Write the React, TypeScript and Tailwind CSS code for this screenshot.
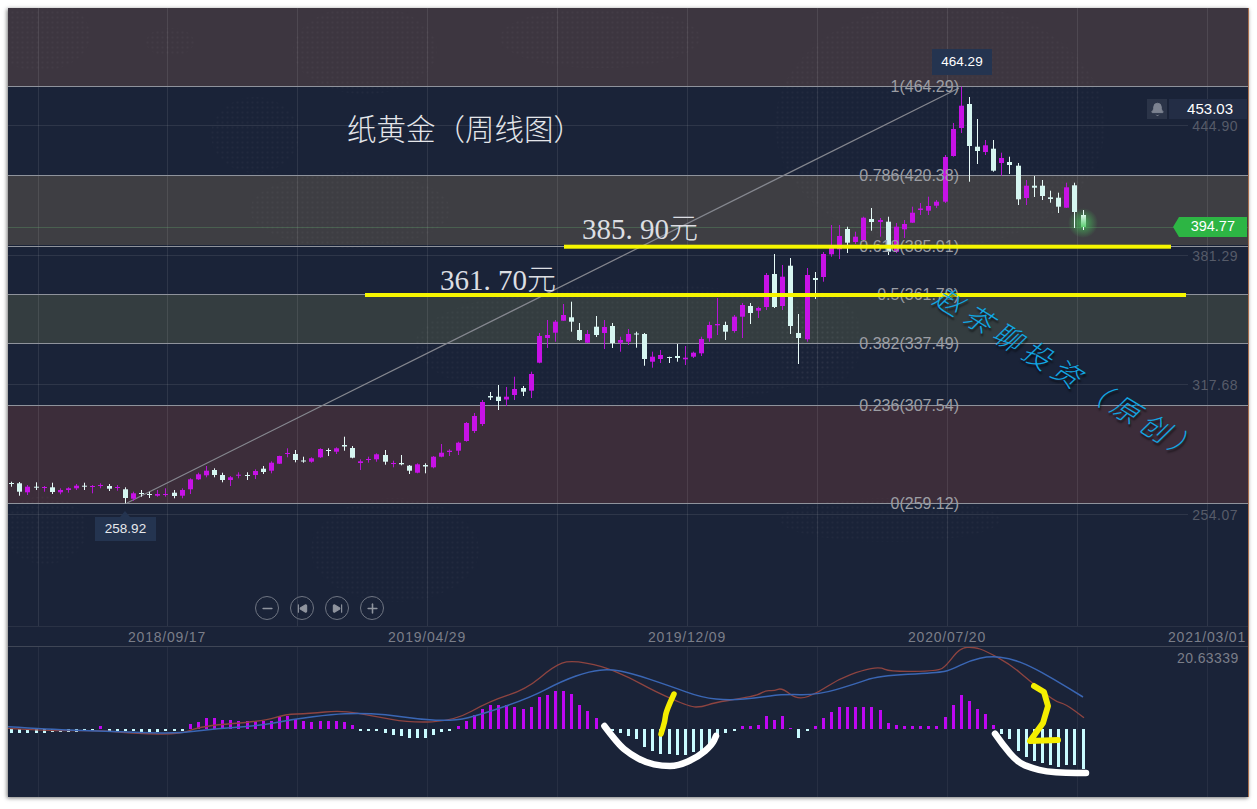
import { Bell, Minus, Plus, SkipBack, SkipForward } from "lucide-react"

type Candle = [number, number, number, number, "w" | "p"]

// wick top, wick bottom, body top, body bottom, colour (weekly, left to right)
const candles: Candle[] = [
  [481.7, 486.7, 483, 484, "w"], [482, 495.7, 483.3, 491.7, "w"], [485, 495, 486.7, 492.3, "p"], [482.3, 490, 486.7, 487.7, "w"],
  [486, 491.7, 487, 488, "p"], [482.7, 494, 487.3, 492, "w"], [488.3, 494.3, 490, 492.3, "p"], [487.3, 492.7, 488.3, 490, "p"],
  [484, 490, 485.7, 488.3, "p"], [482.7, 490, 485.7, 486.7, "w"], [485, 493.3, 486, 487, "p"], [483.3, 488.3, 485, 486, "p"],
  [484, 491, 486, 488.7, "w"], [485, 490.7, 487, 488, "p"], [487.3, 503.3, 489.3, 498, "w"], [491.7, 500.7, 493.3, 498.7, "p"],
  [490, 496.7, 493, 494, "w"], [491.7, 498, 494, 495, "w"], [490, 496.7, 494, 495.7, "p"], [488.3, 496.7, 494, 495, "p"],
  [490, 498.3, 492.7, 496, "w"], [488.3, 498.3, 490, 495.7, "p"], [478.3, 494, 479.3, 489.3, "p"], [472.7, 480, 474.3, 479.3, "p"],
  [466, 477.3, 470.7, 475.3, "p"], [468.3, 477.3, 470, 475, "w"], [472.7, 482.3, 475, 480, "w"], [476, 486, 477.3, 480, "p"],
  [472.3, 478.3, 474.7, 475.7, "p"], [472.3, 480, 475, 476, "w"], [469.3, 479, 471, 475, "p"], [466, 474, 468.7, 472, "w"],
  [461.3, 473.3, 462.7, 470.7, "p"], [455.7, 464, 456, 463.7, "p"], [448.3, 457.3, 453, 454, "p"], [450, 462.3, 454, 460, "w"],
  [456.7, 462.7, 460.5, 461.5, "w"], [457.3, 462.7, 458.3, 461.7, "p"], [448.3, 458, 449, 457.3, "p"], [448.3, 456, 450, 451, "w"],
  [447.3, 454, 448.3, 451.7, "p"], [436.7, 450.7, 445, 446.5, "w"], [446, 458.3, 448, 457.7, "w"], [459.3, 470, 461.3, 463, "p"],
  [456.7, 462.7, 459, 460, "p"], [453.3, 461.7, 454.3, 459.3, "p"], [450, 464.7, 455, 461.7, "w"], [460.7, 467.3, 463, 464, "p"],
  [455, 465.3, 463, 464.3, "w"], [465, 474, 465.7, 470.7, "w"], [463.3, 473.3, 464.3, 472.7, "p"], [463.3, 473.3, 465, 466.5, "w"],
  [456, 468.3, 456.7, 467.3, "p"], [444, 457.3, 452.7, 456.7, "p"], [449.3, 456, 450.7, 452, "p"], [441.7, 455, 442.7, 450.7, "p"],
  [422, 441.7, 423, 441, "p"], [413, 433, 416, 431, "p"], [400, 426, 402, 424, "p"], [392, 400, 396, 397.5, "w"],
  [385, 410, 396.7, 401, "w"], [387, 406, 396.7, 399.5, "p"], [376.7, 400, 389, 395, "p"], [386, 396, 388, 391.7, "w"],
  [371.7, 398, 374, 390.7, "p"], [333, 363.3, 336, 362.7, "p"], [320, 348, 335, 338, "p"], [320, 341.7, 321.7, 332.7, "p"],
  [304, 320.7, 315, 320.7, "p"], [301.7, 331.7, 317.3, 321.7, "w"], [323, 340.7, 330, 340, "w"], [330, 343, 334, 342.7, "p"],
  [316, 337, 326.7, 335, "w"], [320, 349, 327, 333, "p"], [323, 348, 326, 343, "w"], [336.7, 351.7, 340, 342.7, "p"],
  [329, 345, 334, 341.7, "p"], [331.7, 347.7, 333.5, 334.5, "w"], [333, 365.7, 334, 359, "w"], [351.7, 367.7, 356.7, 361.7, "p"],
  [350, 363, 355, 359, "p"], [356.7, 363, 357, 358, "w"], [344, 361.7, 356, 358, "w"], [346, 365, 357.7, 359.3, "p"],
  [351.7, 358, 352.7, 356.7, "p"], [336.7, 356, 339, 353.3, "p"], [321.7, 341.7, 325, 338.3, "p"], [298, 335, 324, 325.3, "p"],
  [321.7, 340, 325, 331.7, "w"], [315, 332.7, 316.7, 331, "p"], [303, 338, 305, 316.7, "p"], [303, 324, 306, 313, "w"],
  [306.7, 318, 308, 310.7, "p"], [273, 310, 275, 307, "p"], [254, 308, 274, 307, "w"], [265, 310, 276.7, 306, "p"],
  [258, 334, 265.7, 326, "w"], [314, 364, 333, 338, "w"], [268, 341.7, 275, 339.3, "p"], [272, 299, 278, 280, "w"],
  [252, 281.7, 254, 277, "p"], [225, 256.7, 247, 254.3, "p"], [225, 259, 236, 249.3, "p"], [226.7, 253, 229, 242.7, "w"],
  [231.7, 244, 236.7, 242, "p"], [216.7, 241.7, 217.7, 240, "p"], [208, 230.7, 219, 222, "w"], [218, 236.7, 220, 222, "p"],
  [216.7, 255, 221.7, 251.7, "w"], [223, 253, 226.7, 251.7, "p"], [220, 238, 224, 229.3, "p"], [206.7, 223, 212.7, 222.7, "p"],
  [203, 215, 208.5, 210, "p"], [196.7, 215, 206, 210.7, "p"], [200, 208, 201.7, 205.7, "p"], [155, 203, 157, 201.7, "p"],
  [123, 156.7, 129, 156, "p"], [86.7, 133, 105.7, 128, "p"], [97, 181.7, 104, 146, "w"], [119, 164, 146.7, 151, "w"],
  [140, 155, 145.3, 152, "p"], [140, 171.7, 148.7, 170.7, "w"], [152.7, 175.7, 158, 163, "p"], [156.7, 174, 162, 165, "w"],
  [163, 205, 165.7, 199.3, "w"], [180, 205, 185.7, 198, "p"], [176, 197, 185.7, 187.7, "w"], [180, 200, 185.7, 196, "w"],
  [190.7, 202.7, 197.3, 199, "w"], [192.7, 213, 197.7, 206.7, "w"], [182.7, 208, 187.3, 207.7, "p"], [182.7, 228, 185.3, 212, "w"],
]

// MACD histogram, positive goes up in purple, negative goes down in cyan
const macd = [
  -4, -4, -4, -4, -4, -3, -3, -3, -3, -2, -2, 3, -2, -2, -2, -2, -3, -3, -3, -2, -2, -2,
  5, 7, 11, 11, 9, 9, 8, 8, 8, 8, 8, 12, 13, 10, 8, 7, 8, 8, 8, 7, 4,
  -2, -2, -2, -4, -6, -7, -9, -9, -9, -6, -3, -2,
  3, 8, 14, 20, 24, 24, 24, 22, 20, 22, 32, 34, 38, 38, 35, 24, 18, 11, 5,
  -2, -4, -7, -10, -18, -22, -25, -25, -26, -26, -23, -22, -15, -8, -4, -2,
  3, 3, 4, 13, 9, 13, 1, -9, -2,
  3, 11, 17, 22, 22, 22, 22, 22, 19, 6, 4, 3, 3, 3, 3, 3, 12, 24, 34, 28, 20, 15, 4,
  -5, -10, -22, -28, -32, -34, -36, -38, -36, -36, -40,
]

const blueLine: number[][] = [[8,725.7],[50,728.3],[100,730],[140,731.7],[181,732.3],[217,727.3],[257,725],[293,718.3],[333,713.3],[357,712.3],[385,713.3],[418,718.3],[454,720],[482,713.3],[530,696.7],[562,680],[590,670],[610,668.3],[630,671.7],[670,685],[702,696.7],[730,699.3],[758,696.7],[782,693.3],[818,694],[854,683.3],[878,675],[938,671.7],[950,669.3],[970,659.3],[990,655],[1010,657.3],[1030,665],[1054,678.3],[1083,696]]
const redLine: number[][] = [[8,727.3],[50,730],[100,729.3],[137,732.7],[181,733.3],[201,725],[265,720],[285,713.3],[309,712.7],[341,709.3],[373,715],[410,721.7],[454,720],[490,700],[526,688.3],[554,665],[570,659.3],[602,665],[630,676.7],[654,690],[690,706],[702,706],[714,701.7],[742,697.3],[758,694],[766,689.3],[774,690],[782,686.7],[798,699.3],[818,691.7],[838,678.3],[862,669.3],[880,666],[890,670.7],[938,670],[946,665],[960,646.7],[974,646],[986,650],[1010,663.3],[1030,680],[1054,700],[1066,703.3],[1084,716.7]]

const fibLevels = [
  { y: 86, label: "1(464.29)" },
  { y: 175, label: "0.786(420.38)" },
  { y: 246, label: "0.618(385.01)" },
  { y: 294, label: "0.5(361.70)" },
  { y: 343, label: "0.382(337.49)" },
  { y: 405, label: "0.236(307.54)" },
  { y: 503, label: "0(259.12)" },
]

const axisPrices = [
  { y: 125, label: "444.90" },
  { y: 255, label: "381.29" },
  { y: 384, label: "317.68" },
  { y: 514, label: "254.07" },
]

const gridX = [38, 167, 297, 427, 557, 687, 817, 947, 1077, 1207]

const candleX = (i: number) => Math.round(11.2 + 8.116 * i)

// rounds the corners of a point list by running through segment midpoints
function smooth(points: number[][]) {
  let d = `M${points[0][0]},${points[0][1]}`
  for (let i = 1; i < points.length - 1; i++) {
    const mx = (points[i][0] + points[i + 1][0]) / 2
    const my = (points[i][1] + points[i + 1][1]) / 2
    d += ` Q${points[i][0]},${points[i][1]} ${mx},${my}`
  }
  const last = points[points.length - 1]
  return `${d} L${last[0]},${last[1]}`
}

function CandleMark({ c, x }: { c: Candle; x: number }) {
  const fill = c[4] === "p" ? "#c712e6" : "#d6f6f1"
  const wick = c[4] === "p" ? "#b514d4" : "#e8fbf8"
  return (
    <g>
      <rect x={x} y={c[0]} width={1} height={c[1] - c[0]} fill={wick} />
      <rect x={x - 2} y={c[2]} width={5} height={c[3] - c[2]} fill={fill} />
    </g>
  )
}

function MainChart() {
  return (
    <svg viewBox="8 8 1240 618" className="absolute inset-0 h-[618px] w-[1240px]">
      <defs>
        <pattern id="dots" width="5" height="5" patternUnits="userSpaceOnUse">
          <circle cx="2.5" cy="2.5" r="1" fill="#ffffff" fillOpacity="0.032" />
        </pattern>
        <radialGradient id="glow">
          <stop offset="0%" stopColor="#49d35f" stopOpacity="0.75" />
          <stop offset="100%" stopColor="#49d35f" stopOpacity="0" />
        </radialGradient>
        <linearGradient id="lastBody" x1="0" y1="0" x2="0" y2="1">
          <stop offset="0%" stopColor="#d6f6e6" />
          <stop offset="100%" stopColor="#5fcf73" />
        </linearGradient>
      </defs>

      {/* faint world map */}
      <g fill="url(#dots)">
        <ellipse cx="40" cy="35" rx="50" ry="36" />
        <ellipse cx="170" cy="42" rx="24" ry="14" />
        <ellipse cx="255" cy="135" rx="44" ry="38" />
        <ellipse cx="365" cy="50" rx="72" ry="44" />
        <ellipse cx="350" cy="210" rx="100" ry="38" />
        <ellipse cx="45" cy="530" rx="42" ry="34" />
        <ellipse cx="395" cy="550" rx="84" ry="52" />
        <ellipse cx="630" cy="345" rx="215" ry="62" />
        <ellipse cx="940" cy="125" rx="165" ry="122" />
        <ellipse cx="820" cy="340" rx="42" ry="48" />
        <ellipse cx="600" cy="38" rx="100" ry="30" />
        <ellipse cx="890" cy="520" rx="110" ry="22" />
      </g>

      {gridX.map((x) => (
        <rect key={x} x={x} y={8} width={1} height={618} fill="#ffffff" fillOpacity="0.09" />
      ))}
      {axisPrices.map((p) => (
        <rect key={p.y} x={8} y={p.y} width={1180} height={1} fill="#ffffff" fillOpacity="0.09" />
      ))}
      <rect x={8} y={227} width={1240} height={1} fill="#62b06f" fillOpacity="0.3" />

      {fibLevels.map((f) => (
        <rect key={f.y} x={8} y={f.y} width={1240} height={1} fill="#8f939c" />
      ))}

      <line x1={127} y1={503} x2={959} y2={88} stroke="#85878f" strokeWidth={1.2} />

      <circle cx={1083} cy={223} r={15} fill="url(#glow)" />
      {candles.map((c, i) => (
        <CandleMark key={i} c={c} x={candleX(i)} />
      ))}
      <rect x={1083} y={210} width={1} height={20} fill="#e8fbf8" />
      <rect x={1081} y={215} width={5} height={12} fill="url(#lastBody)" />

      {fibLevels.map((f) => (
        <text key={f.y} x={959} y={f.y + 5.5} textAnchor="end" fontSize={16} fill="#9c9ea4">
          {f.label}
        </text>
      ))}
      {axisPrices.map((p) => (
        <text key={p.y} x={1238} y={p.y + 6} textAnchor="end" fontSize={14} letterSpacing={0.5} fill="#565b69">
          {p.label}
        </text>
      ))}

      <rect x={564} y={244.7} width={607} height={4} fill="#f6f600" />
      <rect x={365} y={293} width={821} height={4} fill="#f6f600" />
    </svg>
  )
}

function MacdChart() {
  return (
    <svg viewBox="8 646 1240 151" className="absolute inset-0 h-[151px] w-[1240px]">
      {gridX.map((x) => (
        <rect key={x} x={x} y={646} width={1} height={151} fill="#ffffff" fillOpacity="0.06" />
      ))}
      {macd.map((h, i) => (
        <rect
          key={i}
          x={candleX(i) - 1}
          y={h > 0 ? 728 - h : 728}
          width={3}
          height={Math.abs(h)}
          fill={h > 0 ? "#bf06f2" : "#c9fbff"}
        />
      ))}
      <path d={smooth(redLine)} fill="none" stroke="#8e4440" strokeWidth={1.3} />
      <path d={smooth(blueLine)} fill="none" stroke="#3a66b4" strokeWidth={1.5} />

      {/* hand drawn marks */}
      <g fill="none" strokeLinecap="round" strokeLinejoin="round">
        <path d={smooth([[604.4,725],[618,743],[630,753],[646,761.7],[662,765],[678,765],[698,756],[712,744],[716,735]])} stroke="#ffffff" strokeWidth={6.5} />
        <path d={smooth([[995,732.7],[1002,743],[1018,761.7],[1032,767],[1046,770.7],[1066,772],[1086,772]])} stroke="#ffffff" strokeWidth={6.5} />
        <path d={smooth([[674,693],[666,710],[665,720],[661,733]])} stroke="#f5ee00" strokeWidth={5.5} />
        <polyline points="1034,685 1044,691 1048,705 1043,722 1030,740 1058,739" stroke="#f5ee00" strokeWidth={6} />
      </g>
    </svg>
  )
}

function ZoomButton({ children }: { children: React.ReactNode }) {
  return (
    <div className="flex h-6 w-6 items-center justify-center rounded-full border-[1.5px] border-[#6f7582] text-[#8f949e]">
      {children}
    </div>
  )
}

export default function App() {
  return (
    <div className="h-[809px] w-[1257px] bg-white pl-2 pt-2 font-['Liberation_Sans','Noto_Sans_CJK_SC',sans-serif]">
      <div className="flex h-[789px] w-[1241px] flex-col overflow-hidden border-r border-[#a9704f] bg-[#1a2338] shadow-[-1px_1px_4px_rgba(0,0,0,0.55)]">
        <div className="relative h-[618px] shrink-0">
          {/* retracement bands */}
          <div className="flex h-full flex-col">
            <div className="h-[78px] bg-[#3d3640]" />
            <div className="h-[89px]" />
            <div className="h-[70px] bg-[#3e3e43]" />
            <div className="h-[49px]" />
            <div className="h-[49px] bg-[#343d40]" />
            <div className="h-[62px]" />
            <div className="h-[98px] bg-[#3c2d3a]" />
          </div>

          <MainChart />

          <div className="absolute left-[339px] top-[103px] text-[29.5px] font-light leading-[38px] text-[#e4e6ea]">
            纸黄金（周线图）
          </div>
          <div className="absolute left-[574px] top-[204px] font-['Liberation_Serif','Noto_Sans_CJK_SC',serif] text-[29px] font-light leading-[34px] text-[#dcdee2]">
            385<span className="inline-block w-[14.5px]">.</span>90元
          </div>
          <div className="absolute left-[432px] top-[255px] font-['Liberation_Serif','Noto_Sans_CJK_SC',serif] text-[29px] font-light leading-[34px] text-[#dcdee2]">
            361<span className="inline-block w-[14.5px]">.</span>70元
          </div>

          <div className="absolute left-[924px] top-[41px] flex h-[26px] w-[60px] items-center justify-center bg-[#243450] text-[13.5px] text-white">
            464.29
          </div>
          <div className="absolute left-[87px] top-[509px] flex h-[24px] w-[61px] items-center justify-center bg-[#243450] text-[13.5px] text-[#e6e8ec]">
            258.92
          </div>
          <div className="absolute left-[112px] top-[503px] h-0 w-0 border-x-[5px] border-b-[6px] border-x-transparent border-b-[#243450]" />

          <div className="absolute left-[1139px] top-[91px] flex h-5 gap-0.5">
            <div className="flex w-5 items-center justify-center bg-[#2b3448] text-[#7c8290]">
              <Bell size={15} fill="currentColor" strokeWidth={1.5} />
            </div>
            <div className="flex w-[78px] items-center justify-end bg-[#232d45] pr-3.5 text-[15px] text-white">
              453.03
            </div>
          </div>

          <div className="absolute left-[1165px] top-[209px] flex h-5 w-[74px] items-center justify-end bg-[#2db544] pr-3 text-[14.5px] font-medium text-white [clip-path:polygon(6px_0,100%_0,100%_100%,6px_100%,0_50%)]">
            394.77
          </div>

          <div className="absolute left-[247px] top-[588px] flex gap-[11px]">
            <ZoomButton><Minus size={15} strokeWidth={2.5} /></ZoomButton>
            <ZoomButton><SkipBack size={11} fill="currentColor" strokeWidth={2.5} /></ZoomButton>
            <ZoomButton><SkipForward size={11} fill="currentColor" strokeWidth={2.5} /></ZoomButton>
            <ZoomButton><Plus size={15} strokeWidth={2.5} /></ZoomButton>
          </div>

          <div className="absolute left-[936px] top-[274px] origin-top-left rotate-[31.5deg] whitespace-nowrap text-[28px] font-light italic leading-[30px] tracking-[6.5px] text-[#12a6e2] [text-shadow:2px_2px_2px_rgba(0,0,0,0.6)]">
            赵茶聊投资（原创）
          </div>
        </div>

        <div className="grid h-[20px] shrink-0 grid-cols-[repeat(5,260px)] items-center border-t border-[#2a3245] pl-[29px] text-center text-[14px] tracking-[0.8px] text-[#7a7e89]">
          <span>2018/09/17</span>
          <span>2019/04/29</span>
          <span>2019/12/09</span>
          <span>2020/07/20</span>
          <span>2021/03/01</span>
        </div>

        <div className="relative h-[151px] shrink-0 border-t border-[#3f4656]">
          <MacdChart />
          <div className="absolute left-[1169px] top-[1px] text-[14px] tracking-[0.4px] text-[#7a7e89]">20.63339</div>
        </div>
      </div>
    </div>
  )
}
